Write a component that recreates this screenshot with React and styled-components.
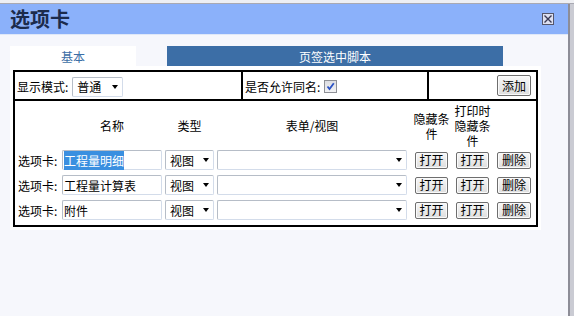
import React from "react"
import styled, { createGlobalStyle } from "styled-components"

const GlobalStyle = createGlobalStyle`
  html, body {
    margin: 0;
    padding: 0;
  }
  body {
    font-family: "Noto Sans CJK SC", "Liberation Sans", sans-serif;
    font-size: 12px;
    color: #000;
    background: #f6f7fc;
  }
`

const Screen = styled.div`
  width: 574px;
  height: 316px;
  display: flex;
  flex-direction: column;
  overflow: hidden;
  background: #f6f7fc;
`

const TopStrip = styled.div`
  height: 3px;
  background: #eeeff3;
  border-bottom: 1px solid #a9a9b2;
`

const Main = styled.div`
  flex: 1;
  display: flex;
`

const Dialog = styled.div`
  width: 568px;
  display: flex;
  flex-direction: column;
  background: #f6f7fc;
`

const Edge = styled.div`
  flex: 1;
  border-left: 2px solid #8d8d97;
  background: #cacbd3;
`

const TitleBar = styled.div`
  height: 30px;
  display: flex;
  align-items: center;
  justify-content: space-between;
  padding: 0 14px 0 10px;
  background: #8bb1fa;
  border-bottom: 1px solid #dfe8f8;
`

const Title = styled.div`
  font-size: 20px;
  font-weight: bold;
  color: #1c2b4c;
  line-height: 1;
`

const CloseButton = styled.div`
  width: 10px;
  height: 10px;
  border: 1px solid #55566a;
  background: #dde0f0;
  display: flex;
  align-items: center;
  justify-content: center;
`

const Body = styled.div`
  padding: 11px 0 0 10px;
`

const Tabs = styled.div`
  display: flex;
  gap: 31px;
  height: 20px;
`

const Tab = styled.div`
  width: ${(p) => p.$width}px;
  display: flex;
  align-items: center;
  justify-content: center;
  background: ${(p) => (p.$active ? "#ffffff" : "#3c6ea6")};
  color: ${(p) => (p.$active ? "#3c6ea6" : "#ffffff")};
`

const Panel = styled.div`
  width: 525px;
  padding: 4px 3px 3px 3px;
  background: #fff;
`

const Table = styled.div`
  border: 2px solid #000;
`

const OptionsRow = styled.div`
  display: grid;
  grid-template-columns: 228px 186px 1fr;
  height: 27px;
  border-bottom: 2px solid #000;
`

const OptionCell = styled.div`
  display: flex;
  align-items: center;
  justify-content: ${(p) => (p.$end ? "flex-end" : "flex-start")};
  padding: ${(p) => (p.$end ? "0 5px 0 0" : "2px 0 0 2px")};
  border-right: ${(p) => (p.$last ? "none" : "2px solid #000")};
  gap: 4px;
`

const ListArea = styled.div`
  padding: 0 0 5px 3px;
`

const Grid = styled.div`
  display: grid;
  grid-template-columns: 41px 100px 49px 190px 38px 38px 39px;
  column-gap: 3px;
  align-items: center;
`

const HeaderRow = styled(Grid)`
  height: 49px;
`

const Rows = styled.div`
  display: flex;
  flex-direction: column;
  gap: 5px;
`

const DataRow = styled(Grid)`
  height: 20px;
`

const HeadLabel = styled.div`
  text-align: center;
  line-height: 15px;
  ${(p) =>
    p.$narrow &&
    `
    width: 37px;
    justify-self: end;
    margin-right: -2px;
  `}
`

const Label = styled.div`
  white-space: nowrap;
`

const TextBox = styled.div`
  box-sizing: border-box;
  height: 20px;
  display: flex;
  align-items: center;
  padding-left: 1px;
  background: #fff;
  border: 1px solid #b6bdc7;
  border-bottom-color: #d3dcea;
  border-right-color: #d3dcea;
  border-radius: 2px;
  white-space: nowrap;
`

const Selected = styled.span`
  background: #3a8fe0;
  color: #fff;
  padding: 1px 0;
`

const Select = styled(TextBox)`
  width: ${(p) => (p.$width ? `${p.$width}px` : "auto")};
  justify-content: space-between;
  padding: 0 4px;
`

const Arrow = styled.span`
  width: 0;
  height: 0;
  border-left: 3.5px solid transparent;
  border-right: 3.5px solid transparent;
  border-top: 4px solid #000;
`

const Button = styled.button`
  box-sizing: border-box;
  width: ${(p) => p.$width}px;
  height: ${(p) => p.$height || 17}px;
  justify-self: end;
  padding: 0;
  font-family: inherit;
  font-size: 12px;
  line-height: 1;
  color: #000;
  border: 1px solid #6e6e6e;
  border-radius: 2px;
  background: linear-gradient(#f7f7f7, #dedede);
  box-shadow: inset 0 0 0 1px #fafafa;
`

const CheckBox = styled.span`
  box-sizing: border-box;
  width: 13px;
  height: 13px;
  border: 1px solid #8e9096;
  background: linear-gradient(#dcdde2, #f2f2f4);
  display: inline-flex;
  align-items: center;
  justify-content: center;
`

const tabs = [
  { name: "工程量明细", selected: true },
  { name: "工程量计算表" },
  { name: "附件" },
]

export default function App() {
  return (
    <Screen>
      <GlobalStyle />
      <TopStrip />
      <Main>
        <Dialog>
          <TitleBar>
            <Title>选项卡</Title>
            <CloseButton>
              <svg width="10" height="10" viewBox="0 0 10 10">
                <path d="M1.5 1.5 L8.5 8.5 M8.5 1.5 L1.5 8.5" stroke="#3a3a55" strokeWidth="1.4" />
              </svg>
            </CloseButton>
          </TitleBar>
          <Body>
            <Tabs>
              <Tab $active $width={126}>基本</Tab>
              <Tab $width={336}>页签选中脚本</Tab>
            </Tabs>
            <Panel>
              <Table>
                <OptionsRow>
                  <OptionCell>
                    显示模式:
                    <Select $width={51}>
                      普通
                      <Arrow />
                    </Select>
                  </OptionCell>
                  <OptionCell>
                    是否允许同名:
                    <CheckBox>
                      <svg width="11" height="11" viewBox="0 0 11 11">
                        <path d="M2.5 5.5 L4.5 8 L8.8 2.2" fill="none" stroke="#2b52c4" strokeWidth="1.8" />
                      </svg>
                    </CheckBox>
                  </OptionCell>
                  <OptionCell $end $last>
                    <Button $width={34} $height={21}>添加</Button>
                  </OptionCell>
                </OptionsRow>
                <ListArea>
                  <HeaderRow>
                    <span />
                    <HeadLabel>名称</HeadLabel>
                    <HeadLabel>类型</HeadLabel>
                    <HeadLabel>表单/视图</HeadLabel>
                    <HeadLabel $narrow>隐藏条件</HeadLabel>
                    <HeadLabel $narrow>打印时隐藏条件</HeadLabel>
                    <span />
                  </HeaderRow>
                  <Rows>
                    {tabs.map((t) => (
                      <DataRow key={t.name}>
                        <Label>选项卡:</Label>
                        <TextBox>{t.selected ? <Selected>{t.name}</Selected> : t.name}</TextBox>
                        <Select>
                          视图
                          <Arrow />
                        </Select>
                        <Select>
                          <span />
                          <Arrow />
                        </Select>
                        <Button $width={33}>打开</Button>
                        <Button $width={33}>打开</Button>
                        <Button $width={34}>删除</Button>
                      </DataRow>
                    ))}
                  </Rows>
                </ListArea>
              </Table>
            </Panel>
          </Body>
        </Dialog>
        <Edge />
      </Main>
    </Screen>
  )
}
